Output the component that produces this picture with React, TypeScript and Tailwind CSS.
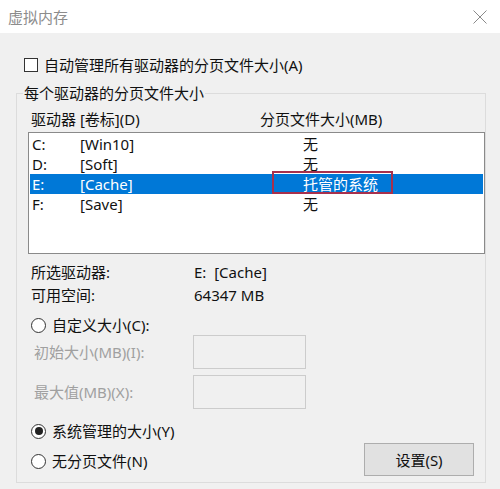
import React from "react";

function Radio({ checked }: { checked?: boolean }) {
  return (
    <span className="w-[15px] h-[15px] rounded-full border border-[#333333] bg-white flex items-center justify-center shrink-0">
      {checked ? <span className="w-[8px] h-[8px] rounded-full bg-[#222222]" /> : null}
    </span>
  );
}

const drives = [
  { d: "C:", l: "[Win10]", s: "无" },
  { d: "D:", l: "[Soft]", s: "无" },
  { d: "E:", l: "[Cache]", s: "托管的系统", sel: true },
  { d: "F:", l: "[Save]", s: "无" },
];

export default function App() {
  return (
    <div className="w-[500px] h-[489px] overflow-hidden bg-[#f0f0f0] text-[15px] leading-[20px] text-[#111111] font-['Noto_Sans','Noto_Sans_CJK_SC',sans-serif]">
      <div className="h-[33px] bg-white flex items-center justify-between pl-[8px] pr-[13px]">
        <span className="text-[#8c8c8c]">虚拟内存</span>
        <svg width="14" height="14" viewBox="0 0 14 14">
          <path d="M0.5 0.5 L13.5 13.5 M13.5 0.5 L0.5 13.5" stroke="#8a8a8a" strokeWidth="1" fill="none" />
        </svg>
      </div>

      <div className="mt-[22px] h-[20px] flex items-center pl-[24px]">
        <span className="w-[14px] h-[14px] border border-[#333333] bg-white mr-[6px] shrink-0" />
        <span>自动管理所有驱动器的分页文件大小(A)</span>
      </div>

      <fieldset className="mt-[8px] ml-[16px] w-[470px] border border-[#dcdcdc]">
        <legend className="ml-[6px] px-[1px] leading-[20px]">每个驱动器的分页文件大小</legend>
        <div className="pl-[11px] pt-[6px] pb-[6px]">
          <div className="h-[20px] flex">
            <span className="ml-[3px] w-[229px]">驱动器 [卷标](D)</span>
            <span>分页文件大小(MB)</span>
          </div>

          <div className="mt-[3px] w-[457px] h-[122px] border border-[#8a8a8a] bg-white p-[1px]">
            {drives.map((r) => (
              <div
                key={r.d}
                className={
                  r.sel
                    ? "relative h-[20px] flex items-center pl-[2px] bg-[#0078d7] text-white"
                    : "relative h-[20px] flex items-center pl-[2px]"
                }
              >
                <span className="w-[48px]">{r.d}</span>
                <span className="w-[223px]">{r.l}</span>
                <span>{r.s}</span>
                {r.sel ? (
                  <span className="absolute left-[242px] top-[-3px] w-[121px] h-[23px] border-2 border-[#a8304c]" />
                ) : null}
              </div>
            ))}
          </div>

          <div className="mt-[8px] h-[20px] flex">
            <span className="ml-[3px] w-[163px]">所选驱动器:</span>
            <span>E:&nbsp; [Cache]</span>
          </div>
          <div className="mt-[3px] h-[20px] flex">
            <span className="ml-[3px] w-[163px]">可用空间:</span>
            <span>64347 MB</span>
          </div>

          <div className="mt-[10px] h-[20px] flex items-center ml-[3px]">
            <Radio />
            <span className="ml-[6px]">自定义大小(C):</span>
          </div>

          <div className="h-[34px] flex items-center">
            <span className="ml-[6px] w-[159px] text-[#a0a0a0]">初始大小(MB)(I):</span>
            <span className="w-[113px] h-[34px] border border-[#cccccc] bg-[#f0f0f0]" />
          </div>
          <div className="mt-[6px] h-[34px] flex items-center">
            <span className="ml-[6px] w-[159px] text-[#a0a0a0]">最大值(MB)(X):</span>
            <span className="w-[113px] h-[34px] border border-[#cccccc] bg-[#f0f0f0]" />
          </div>

          <div className="mt-[12px] h-[20px] flex items-center ml-[3px]">
            <Radio checked />
            <span className="ml-[6px]">系统管理的大小(Y)</span>
          </div>

          <div className="mt-[2px] flex items-center justify-between">
            <div className="flex items-center ml-[3px] mt-[3px]">
              <Radio />
              <span className="ml-[6px]">无分页文件(N)</span>
            </div>
            <button className="w-[110px] h-[33px] mr-[11px] bg-[#e1e1e1] border border-[#adadad] flex items-center justify-center">
              设置(S)
            </button>
          </div>
        </div>
      </fieldset>
    </div>
  );
}
